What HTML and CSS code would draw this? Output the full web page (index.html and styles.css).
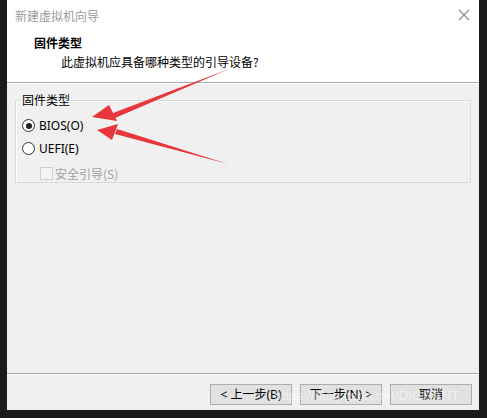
FILE: index.html
```html
<!DOCTYPE html>
<html lang="zh">
<head>
<meta charset="utf-8">
<title>新建虚拟机向导</title>
<link rel="stylesheet" href="styles.css">
</head>
<body>
<div class="window">
  <div class="titlebar">
    <span class="title">新建虚拟机向导</span>
    <svg class="close" width="12" height="12" viewBox="0 0 12 12"><path d="M1 1L11 11M11 1L1 11" stroke="#8a8a8a" stroke-width="1.1" fill="none"/></svg>
  </div>
  <div class="header">
    <div class="h-title">固件类型</div>
    <div class="h-sub">此虚拟机应具备哪种类型的引导设备?</div>
  </div>
  <div class="body">
    <fieldset class="group">
      <legend class="legend">固件类型</legend>
      <div class="opt">
        <span class="radio checked"></span><span class="lbl">BIOS(O)</span>
      </div>
      <div class="opt">
        <span class="radio"></span><span class="lbl">UEFI(E)</span>
      </div>
      <div class="opt sub disabled">
        <span class="check"></span><span class="lbl">安全引导(S)</span>
      </div>
    </fieldset>
  </div>
  <div class="footer">
    <button class="btn">&lt; 上一步(B)</button>
    <button class="btn">下一步(N) &gt;</button>
    <button class="btn cancel">取消</button>
  </div>
</div>
<svg class="arrows" width="487" height="418" viewBox="0 0 487 418">
  <path d="M229 69 L113 113 L115 118 Z" fill="#e8363a"/>
  <path d="M92 117 L109 105 L117 121 Z" fill="#e8363a"/>
  <path d="M228 164 L117 129 L115 134 Z" fill="#e8363a"/>
  <path d="M97 130 L118 124 L112 140 Z" fill="#e8363a"/>
</svg>
<div class="watermark">https://blog.csdn.net/DIGRANT</div>
</body>
</html>
```
FILE: styles.css
```css
html, body {
  margin: 0;
  padding: 0;
}
body {
  width: 487px;
  height: 418px;
  background: #1b1b1b;
  position: relative;
  overflow: hidden;
  font-family: "Noto Sans", "Noto Sans CJK SC", sans-serif;
  font-size: 12px;
}
.window {
  margin-left: 7px;
  width: 472px;
  height: 410px;
  background: #f0f0f0;
  display: flex;
  flex-direction: column;
  box-sizing: border-box;
}
.titlebar {
  height: 30px;
  background: #fff;
  display: flex;
  align-items: center;
  justify-content: space-between;
  padding: 0 9px 0 8px;
}
.title {
  color: #9a9a9a;
  font-family: "Noto Sans CJK SC", sans-serif;
  font-size: 12px;
}
.close {
  display: block;
}
.header {
  height: 52px;
  background: #fff;
  border-bottom: 1px solid #a9a9a9;
  box-shadow: 0 1px 0 #fff;
  font-family: "Noto Sans CJK SC", sans-serif;
}
.h-title {
  font-weight: bold;
  color: #000;
  font-size: 12px;
  padding-left: 27px;
  margin-top: 4px;
  line-height: 17px;
}
.h-sub {
  color: #000;
  font-size: 12px;
  padding-left: 54px;
  line-height: 17px;
  margin-top: 2px;
}
.body {
  flex: 1;
  padding: 10px 8px 0 8px;
}
.group {
  margin: 0;
  padding: 7px 7px 4px 6px;
  border: 1px solid #d9d9d9;
  height: 90px;
  box-sizing: border-box;
  box-shadow: inset 1px 1px 0 #fff;
  width: 456px;
}
.legend {
  padding: 0 1px;
  margin-left: -1px;
  font-family: "Noto Sans CJK SC", sans-serif;
  color: #000;
  font-size: 12px;
  line-height: 14px;
}
.opt {
  display: flex;
  align-items: center;
  height: 23px;
}
.opt.sub {
  padding-left: 18px;
  height: 26px;
}
.radio {
  width: 11px;
  height: 11px;
  border: 1px solid #333;
  border-radius: 50%;
  background: #fff;
  box-sizing: content-box;
  position: relative;
  margin-right: 4px;
  flex: none;
}
.radio.checked::after {
  content: "";
  position: absolute;
  left: 2.5px;
  top: 2.5px;
  width: 6px;
  height: 6px;
  border-radius: 50%;
  background: #222;
}
.check {
  width: 11px;
  height: 11px;
  border: 1px solid #cfcfcf;
  background: #f4f4f4;
  margin-right: 2px;
  flex: none;
}
.lbl {
  color: #000;
  font-size: 12px;
}
.disabled .lbl {
  color: #a0a0a0;
  font-family: "Noto Sans CJK SC", sans-serif;
  font-size: 12px;
}
.footer {
  height: 37px;
  border-top: 1px solid #a9a9a9;
  box-shadow: inset 0 1px 0 #fff;
  display: flex;
  align-items: flex-start;
  padding: 10px 0 0 203px;
  box-sizing: border-box;
  gap: 8px;
}
.btn {
  width: 82px;
  height: 21px;
  margin: 0;
  padding: 0;
  background: #e1e1e1;
  border: 1px solid #adadad;
  font-family: "Noto Sans", "Noto Sans CJK SC", sans-serif;
  font-size: 12px;
  color: #000;
  line-height: 19px;
}
.arrows {
  position: absolute;
  left: 0;
  top: 0;
}
.watermark {
  position: absolute;
  left: 274px;
  top: 388px;
  font-family: "Liberation Sans", sans-serif;
  font-size: 13.5px;
  color: rgba(255, 255, 255, 0.5);
}
```
